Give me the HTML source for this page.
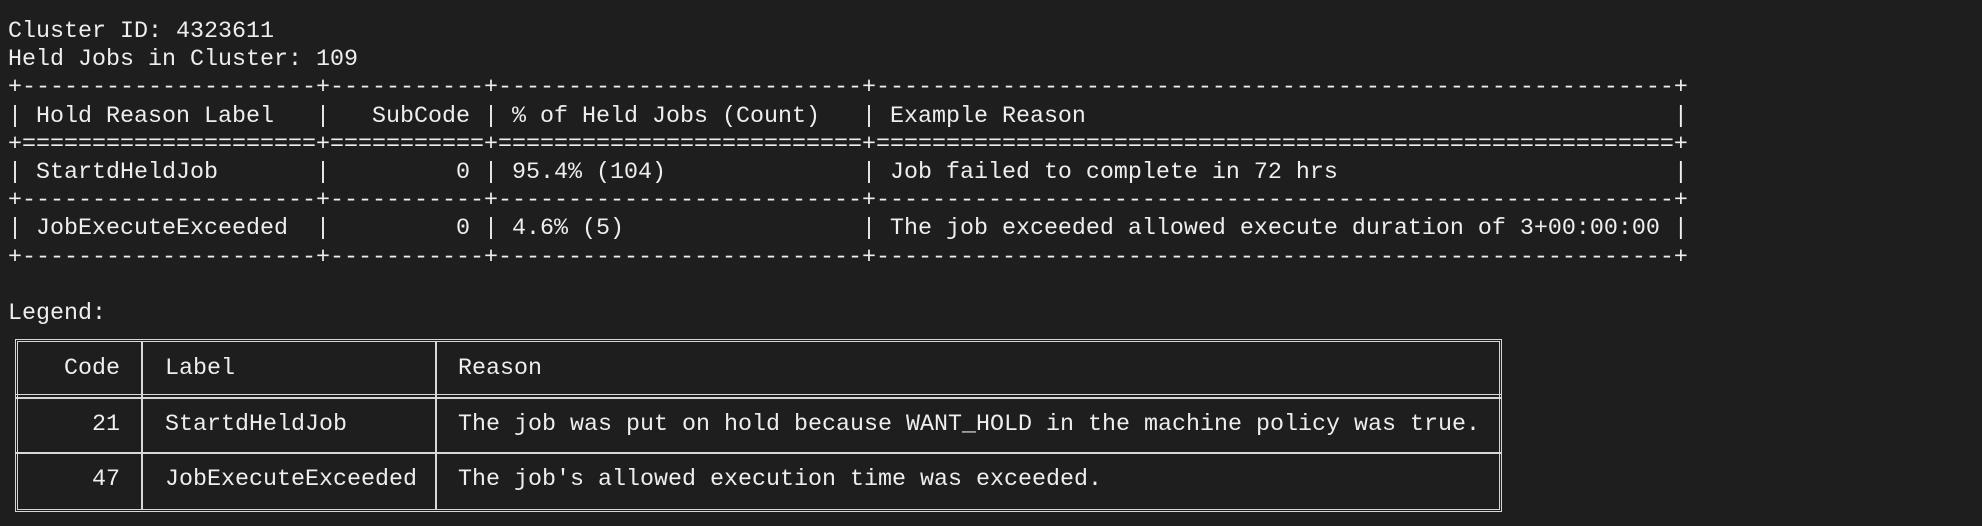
<!DOCTYPE html>
<html><head><meta charset="utf-8"><style>
html,body{margin:0;padding:0;background:#1e1e1e;width:1982px;height:526px;overflow:hidden}
body{position:relative;font-family:"Liberation Mono",monospace;color:#eeeeee}
pre{position:absolute;left:8px;top:18px;margin:0;font-family:"Liberation Mono",monospace;font-size:23.33px;line-height:28.2px;color:#eeeeee}
.box{position:absolute;left:15px;top:339px;width:1481px;height:167px;border:3px double #d8d8d8}
.h{position:absolute;left:15px;width:1487px;background:#d8d8d8}
.v{position:absolute;top:341px;height:169px;width:2px;background:#d8d8d8}
.t{position:absolute;font-size:23.33px;line-height:28px;white-space:pre;color:#eeeeee}
</style></head><body>
<pre>Cluster ID: 4323611
Held Jobs in Cluster: 109
+---------------------+-----------+--------------------------+---------------------------------------------------------+
| Hold Reason Label   |   SubCode | % of Held Jobs (Count)   | Example Reason                                          |
+=====================+===========+==========================+=========================================================+
| StartdHeldJob       |         0 | 95.4% (104)              | Job failed to complete in 72 hrs                        |
+---------------------+-----------+--------------------------+---------------------------------------------------------+
| JobExecuteExceeded  |         0 | 4.6% (5)                 | The job exceeded allowed execute duration of 3+00:00:00 |
+---------------------+-----------+--------------------------+---------------------------------------------------------+

Legend:</pre>
<div class="box"></div>
<div class="h" style="top:394px;height:1px"></div>
<div class="h" style="top:397px;height:2px"></div>
<div class="h" style="top:452px;height:2px"></div>
<div class="v" style="left:141px"></div>
<div class="v" style="left:435px"></div>
<div class="t" style="left:64px;width:56px;text-align:right;top:355px">Code</div>
<div class="t" style="left:165px;top:355px">Label</div>
<div class="t" style="left:458px;top:355px">Reason</div>
<div class="t" style="left:64px;width:56px;text-align:right;top:411px">21</div>
<div class="t" style="left:165px;top:411px">StartdHeldJob</div>
<div class="t" style="left:458px;top:411px">The job was put on hold because WANT_HOLD in the machine policy was true.</div>
<div class="t" style="left:64px;width:56px;text-align:right;top:466px">47</div>
<div class="t" style="left:165px;top:466px">JobExecuteExceeded</div>
<div class="t" style="left:458px;top:466px">The job's allowed execution time was exceeded.</div>
</body></html>
